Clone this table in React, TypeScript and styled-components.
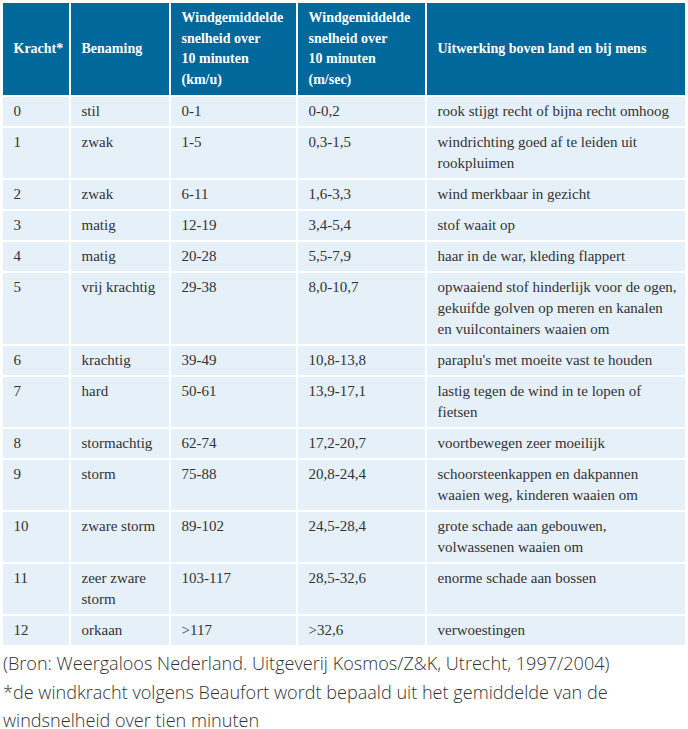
import React from 'react';
import styled, { createGlobalStyle } from 'styled-components';

const COLORS = {
  header: '#01689b',
  row: '#e5f0f9',
  text: '#333333',
  white: '#ffffff',
};

const GlobalStyle = createGlobalStyle`
  html, body {
    margin: 0;
    padding: 0;
    background: ${COLORS.white};
  }
`;

// each cell holds its lines as they wrap in the printed table
interface Beaufort {
  kracht: string;
  benaming: string[];
  kmu: string;
  ms: string;
  uitwerking: string[];
}

const ROWS: Beaufort[] = [
  { kracht: '0', benaming: ['stil'], kmu: '0-1', ms: '0-0,2', uitwerking: ['rook stijgt recht of bijna recht omhoog'] },
  {
    kracht: '1',
    benaming: ['zwak'],
    kmu: '1-5',
    ms: '0,3-1,5',
    uitwerking: ['windrichting goed af te leiden uit', 'rookpluimen'],
  },
  { kracht: '2', benaming: ['zwak'], kmu: '6-11', ms: '1,6-3,3', uitwerking: ['wind merkbaar in gezicht'] },
  { kracht: '3', benaming: ['matig'], kmu: '12-19', ms: '3,4-5,4', uitwerking: ['stof waait op'] },
  { kracht: '4', benaming: ['matig'], kmu: '20-28', ms: '5,5-7,9', uitwerking: ['haar in de war, kleding flappert'] },
  {
    kracht: '5',
    benaming: ['vrij krachtig'],
    kmu: '29-38',
    ms: '8,0-10,7',
    uitwerking: [
      'opwaaiend stof hinderlijk voor de ogen,',
      'gekuifde golven op meren en kanalen',
      'en vuilcontainers waaien om',
    ],
  },
  { kracht: '6', benaming: ['krachtig'], kmu: '39-49', ms: '10,8-13,8', uitwerking: ["paraplu's met moeite vast te houden"] },
  {
    kracht: '7',
    benaming: ['hard'],
    kmu: '50-61',
    ms: '13,9-17,1',
    uitwerking: ['lastig tegen de wind in te lopen of', 'fietsen'],
  },
  { kracht: '8', benaming: ['stormachtig'], kmu: '62-74', ms: '17,2-20,7', uitwerking: ['voortbewegen zeer moeilijk'] },
  {
    kracht: '9',
    benaming: ['storm'],
    kmu: '75-88',
    ms: '20,8-24,4',
    uitwerking: ['schoorsteenkappen en dakpannen', 'waaien weg, kinderen waaien om'],
  },
  {
    kracht: '10',
    benaming: ['zware storm'],
    kmu: '89-102',
    ms: '24,5-28,4',
    uitwerking: ['grote schade aan gebouwen,', 'volwassenen waaien om'],
  },
  {
    kracht: '11',
    benaming: ['zeer zware', 'storm'],
    kmu: '103-117',
    ms: '28,5-32,6',
    uitwerking: ['enorme schade aan bossen'],
  },
  { kracht: '12', benaming: ['orkaan'], kmu: '>117', ms: '>32,6', uitwerking: ['verwoestingen'] },
];

const COL_WIDTHS = [66, 98, 125, 127, 258];

const Lines: React.FC<{ lines: string[] }> = ({ lines }) => (
  <>
    {lines.map((line, i) => (
      <Line key={i}>{line}</Line>
    ))}
  </>
);

const App: React.FC = () => (
  <Page>
    <GlobalStyle />
    <Table>
      <colgroup>
        {COL_WIDTHS.map((w, i) => (
          <col key={i} style={{ width: w }} />
        ))}
      </colgroup>
      <thead>
        <tr>
          <HeadCell>Kracht*</HeadCell>
          <HeadCell>Benaming</HeadCell>
          <HeadCell>
            <Lines lines={['Windgemiddelde', 'snelheid over', '10 minuten', '(km/u)']} />
          </HeadCell>
          <HeadCell>
            <Lines lines={['Windgemiddelde', 'snelheid over', '10 minuten', '(m/sec)']} />
          </HeadCell>
          <HeadCell>Uitwerking boven land en bij mens</HeadCell>
        </tr>
      </thead>
      <tbody>
        {ROWS.map(row => (
          <tr key={row.kracht}>
            <Cell>{row.kracht}</Cell>
            <Cell>
              <Lines lines={row.benaming} />
            </Cell>
            <Cell>{row.kmu}</Cell>
            <Cell>{row.ms}</Cell>
            <Cell>
              <Lines lines={row.uitwerking} />
            </Cell>
          </tr>
        ))}
      </tbody>
    </Table>
    <Note>
      <NoteLine>(Bron: Weergaloos Nederland. Uitgeverij Kosmos/Z&amp;K, Utrecht, 1997/2004)</NoteLine>
      <NoteLine>*de windkracht volgens Beaufort wordt bepaald uit het gemiddelde van de</NoteLine>
      <NoteLine>windsnelheid over tien minuten</NoteLine>
    </Note>
  </Page>
);

const Page = styled.div`
  width: 688px;
  padding: 1px 1px 0 1px;
  box-sizing: border-box;
`;

const Table = styled.table`
  width: 686px;
  table-layout: fixed;
  border-collapse: separate;
  border-spacing: 2px;
  background: ${COLORS.white};
`;

const Line = styled.span`
  display: block;
  white-space: nowrap;
`;

const HeadCell = styled.th`
  background: ${COLORS.header};
  color: ${COLORS.white};
  font-family: 'Liberation Serif', 'Times New Roman', serif;
  font-weight: 700;
  font-size: 14px;
  line-height: 20.5px;
  text-align: left;
  vertical-align: middle;
  padding: 5px 6px 5px 10.5px;
  white-space: nowrap;
`;

const Cell = styled.td`
  background: ${COLORS.row};
  color: ${COLORS.text};
  font-family: 'Liberation Serif', 'Times New Roman', serif;
  font-size: 15px;
  line-height: 21px;
  vertical-align: top;
  padding: 4px 4px 4px 10.5px;
  white-space: nowrap;
  overflow: hidden;
`;

const Note = styled.div`
  margin: 2px 0 0 2px;
  font-family: 'Open Sans', 'Liberation Sans', Arial, sans-serif;
  font-stretch: 92%;
  font-weight: 300;
  font-size: 18.1px;
  line-height: 28.5px;
  color: ${COLORS.text};
`;

const NoteLine = styled.div`
  white-space: nowrap;
`;

export default App;
